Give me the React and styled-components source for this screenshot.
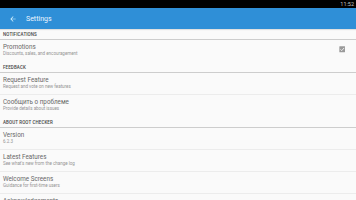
import React from 'react';
import styled, { createGlobalStyle } from 'styled-components';

const sections = [
  {
    title: 'NOTIFICATIONS',
    rows: [{ title: 'Promotions', sub: 'Discounts, sales, and encouragement', checked: true }],
  },
  {
    title: 'FEEDBACK',
    rows: [
      { title: 'Request Feature', sub: 'Request and vote on new features' },
      { title: 'Сообщить о проблеме', sub: 'Provide details about issues' },
    ],
  },
  {
    title: 'ABOUT ROOT CHECKER',
    rows: [
      { title: 'Version', sub: '6.2.3' },
      { title: 'Latest Features', sub: "See what's new from the change log" },
      { title: 'Welcome Screens', sub: 'Guidance for first-time users' },
      { title: 'Acknowledgements', sub: 'Open source libraries' },
    ],
  },
];

function App() {
  return (
    <Page>
      <GlobalStyle />
      <StatusBar>
        <Clock>11:52</Clock>
      </StatusBar>
      <AppBar>
        <BackArrow viewBox="0 0 24 24">
          <path d="M20 11H7.8l5.6-5.6L12 4l-8 8 8 8 1.4-1.4L7.8 13H20z" />
        </BackArrow>
        <AppTitle>Settings</AppTitle>
      </AppBar>
      <List>
        {sections.map((section) => (
          <Section key={section.title}>
            <SectionHeader>{section.title}</SectionHeader>
            {section.rows.map((row, i) => (
              <Row key={row.title} last={i === section.rows.length - 1}>
                <RowText>
                  <RowTitle>{row.title}</RowTitle>
                  <RowSub>{row.sub}</RowSub>
                </RowText>
                {row.checked && (
                  <Check viewBox="0 0 10 10">
                    <rect x="0.5" y="0.5" width="9" height="9" rx="0.8" fill="#9a9a9a" />
                    <path d="M2.2 5.2 L4.2 7.1 L7.9 3" stroke="#fafafa" strokeWidth="1.3" fill="none" />
                  </Check>
                )}
              </Row>
            ))}
          </Section>
        ))}
      </List>
    </Page>
  );
}

const GlobalStyle = createGlobalStyle`
  html, body {
    margin: 0;
    padding: 0;
    background: #fafafa;
    overflow: hidden;
  }
  body {
    font-family: Roboto, 'Noto Sans', sans-serif;
  }
`;

const Page = styled.div`
  width: 356px;
  height: 200px;
  display: flex;
  flex-direction: column;
  background: #fafafa;
  overflow: hidden;
`;

const StatusBar = styled.div`
  height: 8px;
  background: #000;
  display: flex;
  align-items: center;
  justify-content: flex-end;
  padding-right: 2px;
  flex-shrink: 0;
`;

const Clock = styled.span`
  color: #c4c4c4;
  font-size: 5.5px;
  line-height: 8px;
`;

const AppBar = styled.div`
  height: 21px;
  background: #2f8fd7;
  display: flex;
  align-items: center;
  padding-left: 9px;
  gap: 9px;
  flex-shrink: 0;
  box-shadow: 0 1px 1px rgba(0, 0, 0, 0.1);
  position: relative;
  z-index: 1;
`;

const BackArrow = styled.svg`
  width: 8px;
  height: 8px;
  fill: #d8f4ff;
`;

const AppTitle = styled.span`
  color: #eef6ff;
  font-size: 7px;
  line-height: 8px;
`;

const List = styled.div`
  display: flex;
  flex-direction: column;
`;

const Section = styled.div`
  display: flex;
  flex-direction: column;
`;

const SectionHeader = styled.div`
  height: 10px;
  padding-left: 3px;
  display: flex;
  align-items: center;
  border-bottom: 1px solid #cdcdcd;
  font-size: 4.5px;
  font-weight: 500;
  letter-spacing: 0.1px;
  color: #444;
`;

const Row = styled.div`
  height: 21px;
  padding: 0 11px 0 3px;
  display: flex;
  align-items: center;
  justify-content: space-between;
  border-bottom: 1px solid ${(p) => (p.last ? 'transparent' : '#ececec')};
`;

const RowText = styled.div`
  display: flex;
  flex-direction: column;
`;

const RowTitle = styled.span`
  font-size: 6.3px;
  line-height: 7px;
  color: #686868;
`;

const RowSub = styled.span`
  font-size: 4.5px;
  line-height: 6px;
  color: #949494;
`;

const Check = styled.svg`
  width: 6.5px;
  height: 6.5px;
  margin-top: -2px;
`;

export default App;
